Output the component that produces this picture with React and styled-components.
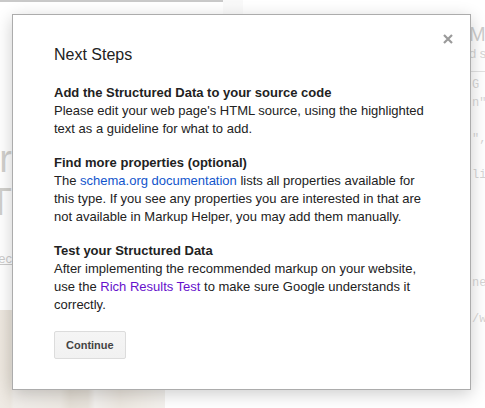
import React from 'react';
import styled, { createGlobalStyle } from 'styled-components';

const GlobalStyle = createGlobalStyle`
  html, body {
    margin: 0;
    padding: 0;
    background: #fff;
  }
  body {
    font-family: "Liberation Sans", Arial, sans-serif;
  }
`;

const Stage = styled.div`
  position: relative;
  width: 485px;
  height: 408px;
  overflow: hidden;
  background: #fff;
`;

/* the page behind the modal */
const Page = styled.div`
  display: flex;
  height: 100%;
`;

const LeftColumn = styled.div`
  flex: none;
  width: 223px;
  display: flex;
  flex-direction: column;
  border-top: 2px solid #2a2a2a;
`;

const Gutter = styled.div`
  flex: none;
  width: 20px;
  background: linear-gradient(180deg, #e6e6e6 0, #fff 40px);
`;

const RightColumn = styled.div`
  flex: 1;
  min-width: 0;
  padding: 23px 0 0 226px;
  overflow: hidden;
  white-space: nowrap;
`;

const EdgeText = styled.div`
  width: 12px;
  display: flex;
  justify-content: flex-end;
  overflow: hidden;
  white-space: nowrap;
`;

const BigTitle = styled.div`
  margin-top: 136px;
  font-size: 38px;
  line-height: 43px;
  color: #4a4436;
`;

const PageLink = styled.div`
  margin-top: 26px;
  font-size: 13px;
  line-height: 18px;
  color: #333;
  text-decoration: underline;
`;

const Photo = styled.div`
  margin-top: auto;
  width: 165px;
  height: 98px;
  background:
    linear-gradient(180deg, rgba(255, 255, 255, 0) 60%, rgba(200, 190, 175, 0.4) 100%),
    linear-gradient(90deg, #b8a182 0, #a88f6a 10px, #c2b6a6 14px, #b09c80 60px, #7d6236 70px, #8d7450 88px, #cdc6bd 95px, #a98f6c 120px, #c2af92 140px, #d8cfc2 165px);
`;

const SideHeading = styled.div`
  font-size: 20px;
  line-height: 22px;
  color: #3a3a3a;
`;

const SideSub = styled.div`
  font-size: 13px;
  line-height: 18px;
  color: #555;
`;

const SideRule = styled.div`
  margin-top: 8px;
  border-top: 1px solid #8a8a8a;
`;

const Code = styled.pre`
  margin: 4px 0 0 3px;
  font-family: "Liberation Mono", "Courier New", monospace;
  font-size: 12px;
  line-height: 18px;
  color: #5a5a5a;
`;

const Backdrop = styled.div`
  position: absolute;
  inset: 0;
  background: rgba(255, 255, 255, 0.75);
`;

/* the modal */
const Dialog = styled.div`
  position: absolute;
  left: 12px;
  top: 14px;
  width: 459px;
  box-sizing: border-box;
  padding: 30px 42px 30px 41px;
  background: #fff;
  border: 1px solid #acacac;
  box-shadow: 0 4px 16px rgba(0, 0, 0, 0.2);
  color: #222;
`;

const CloseButton = styled.button`
  position: absolute;
  top: 18px;
  right: 16px;
  width: 12px;
  height: 12px;
  padding: 1px;
  border: 0;
  background: none;
  cursor: pointer;
  display: flex;
`;

const Title = styled.h2`
  margin: 0;
  font-size: 16px;
  font-weight: normal;
  line-height: 20px;
  color: #222;
`;

const Section = styled.div`
  margin-top: ${(p) => (p.first ? '19px' : '16px')};
  font-size: 13px;
  line-height: 18px;
`;

const SectionTitle = styled.div`
  font-weight: bold;
  color: #222;
`;

const SectionText = styled.p`
  margin: 0;
  color: #222;
`;

const Link = styled.a`
  color: ${(p) => (p.visited ? '#6611cc' : '#1155cc')};
  text-decoration: none;
`;

const Button = styled.button`
  margin-top: 17px;
  height: 28px;
  padding: 0 11px;
  box-sizing: border-box;
  border: 1px solid #dcdcdc;
  border-radius: 2px;
  background: linear-gradient(#f5f5f5, #f1f1f1);
  font-family: "Liberation Sans", Arial, sans-serif;
  font-size: 11px;
  font-weight: bold;
  color: #444;
  cursor: pointer;
`;

const codeLines = ['G', 'n"', '', '",', '', 'li', '', '', '', '', '', 'ne', '', '/w'];

export default function App() {
  return (
    <Stage>
      <GlobalStyle />
      <Page>
        <LeftColumn>
          <BigTitle>
            <EdgeText>Helper</EdgeText>
            <EdgeText>TEST</EdgeText>
          </BigTitle>
          <PageLink>
            <EdgeText>Sec</EdgeText>
          </PageLink>
          <Photo />
        </LeftColumn>
        <Gutter />
        <RightColumn>
          <SideHeading>Markup</SideHeading>
          <SideSub>d source</SideSub>
          <SideRule />
          <Code>{codeLines.join('\n')}</Code>
        </RightColumn>
      </Page>
      <Backdrop />
      <Dialog>
        <CloseButton aria-label="Close">
          <svg width="10" height="10" viewBox="0 0 10 10">
            <path d="M1 1 L9 9 M9 1 L1 9" stroke="#9a9a9a" strokeWidth="2.2" />
          </svg>
        </CloseButton>
        <Title>Next Steps</Title>
        <Section first>
          <SectionTitle>Add the Structured Data to your source code</SectionTitle>
          <SectionText>
            Please edit your web page's HTML source, using the highlighted text as a guideline for
            what to add.
          </SectionText>
        </Section>
        <Section>
          <SectionTitle>Find more properties (optional)</SectionTitle>
          <SectionText>
            The <Link href="#">schema.org documentation</Link> lists all properties available for
            this type. If you see any properties you are interested in that are not available in
            Markup Helper, you may add them manually.
          </SectionText>
        </Section>
        <Section>
          <SectionTitle>Test your Structured Data</SectionTitle>
          <SectionText>
            After implementing the recommended markup on your website, use the{' '}
            <Link href="#" visited>Rich Results Test</Link> to make sure Google understands it
            correctly.
          </SectionText>
        </Section>
        <Button>Continue</Button>
      </Dialog>
    </Stage>
  );
}
